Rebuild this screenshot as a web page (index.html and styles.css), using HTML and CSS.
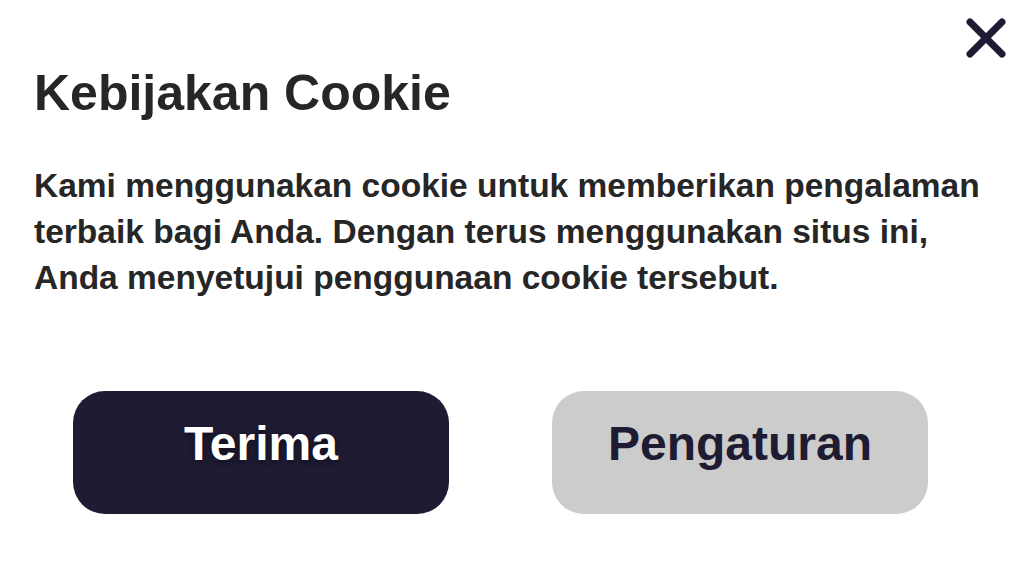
FILE: index.html
```html
<!DOCTYPE html>
<html lang="id">
<head>
<meta charset="utf-8">
<title>Kebijakan Cookie</title>
<link rel="stylesheet" href="styles.css">
</head>
<body>
<div class="dialog">
  <button class="close" aria-label="Tutup">
    <svg width="40" height="40" viewBox="0 0 40 40"><path d="M4 4 L36 36 M36 4 L4 36" stroke="#1e1b33" stroke-width="7" stroke-linecap="round" fill="none"/></svg>
  </button>
  <h1 class="title">Kebijakan Cookie</h1>
  <p class="text">Kami menggunakan cookie untuk memberikan pengalaman terbaik bagi Anda. Dengan terus menggunakan situs ini, Anda menyetujui penggunaan cookie tersebut.</p>
  <div class="actions">
    <button class="btn btn-primary">Terima</button>
    <button class="btn btn-secondary">Pengaturan</button>
  </div>
</div>
</body>
</html>
```
FILE: styles.css
```css
html, body {
  margin: 0;
  padding: 0;
  background: #ffffff;
}
body {
  font-family: "Liberation Sans", Arial, sans-serif;
  width: 1024px;
  height: 576px;
  overflow: hidden;
}
.dialog {
  position: relative;
  padding: 63px 34px 0 34px;
}
.close {
  position: absolute;
  top: 18px;
  right: 18px;
  width: 40px;
  height: 40px;
  padding: 0;
  border: none;
  background: transparent;
  display: flex;
}
.title {
  margin: 0;
  font-size: 50px;
  line-height: 60px;
  font-weight: 700;
  color: #262626;
}
.text {
  margin: 40px 0 0 0;
  font-size: 33.5px;
  line-height: 46px;
  font-weight: 700;
  color: #262626;
  max-width: 955px;
}
.actions {
  display: flex;
  gap: 103px;
  margin: 90px 0 0 39px;
}
.btn {
  width: 376px;
  height: 123px;
  border: none;
  border-radius: 32px;
  font-family: "Liberation Sans", Arial, sans-serif;
  font-size: 48px;
  font-weight: 700;
  padding: 0 0 18px 0;
}
.btn-primary {
  background: #1e1b33;
  color: #ffffff;
  text-shadow: 0 2px 6px rgba(0,0,0,0.5);
}
.btn-secondary {
  background: #cccccc;
  color: #1e1b33;
}
```
